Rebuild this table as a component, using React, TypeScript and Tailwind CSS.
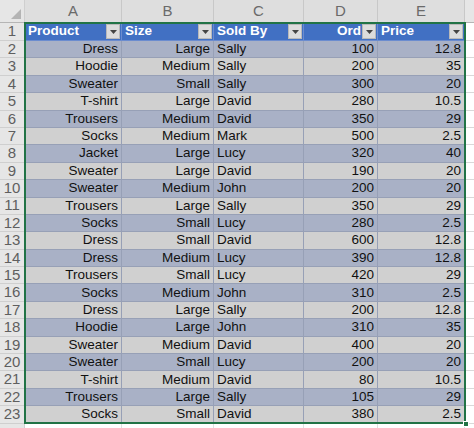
import React from "react";

type Row = [string, string, string, number, number];

const rows: Row[] = [
  ["Dress", "Large", "Sally", 100, 12.8],
  ["Hoodie", "Medium", "Sally", 200, 35],
  ["Sweater", "Small", "Sally", 300, 20],
  ["T-shirt", "Large", "David", 280, 10.5],
  ["Trousers", "Medium", "David", 350, 29],
  ["Socks", "Medium", "Mark", 500, 2.5],
  ["Jacket", "Large", "Lucy", 320, 40],
  ["Sweater", "Large", "David", 190, 20],
  ["Sweater", "Medium", "John", 200, 20],
  ["Trousers", "Large", "Sally", 350, 29],
  ["Socks", "Small", "Lucy", 280, 2.5],
  ["Dress", "Small", "David", 600, 12.8],
  ["Dress", "Medium", "Lucy", 390, 12.8],
  ["Trousers", "Small", "Lucy", 420, 29],
  ["Socks", "Medium", "John", 310, 2.5],
  ["Dress", "Large", "Sally", 200, 12.8],
  ["Hoodie", "Large", "John", 310, 35],
  ["Sweater", "Medium", "David", 400, 20],
  ["Sweater", "Small", "Lucy", 200, 20],
  ["T-shirt", "Medium", "David", 80, 10.5],
  ["Trousers", "Large", "Sally", 105, 29],
  ["Socks", "Small", "David", 380, 2.5],
];

const cols = ["A", "B", "C", "D", "E"];
const widths = ["w-[97px]", "w-[92px]", "w-[90px]", "w-[74px]", "w-[87px]"];

function Dropdown() {
  return (
    <span className="flex h-[15px] w-[14px] shrink-0 items-center justify-center border border-[#b9b9b9] bg-[#dcdcdc]">
      <svg width="7" height="4" viewBox="0 0 7 4">
        <path d="M0 0h7L3.5 4z" fill="#444" />
      </svg>
    </span>
  );
}

function RowNum({ n }: { n: number }) {
  return (
    <div className="flex h-full w-[25px] shrink-0 items-center justify-center border-b border-r border-[#cfcfcf] bg-[#e6e6e6] text-[15px] text-[#5f5f5f]">
      {n}
    </div>
  );
}

export default function App() {
  return (
    <div
      className="relative h-[428px] w-[474px] overflow-hidden bg-white text-[13.5px] text-[#111]"
      style={{ fontFamily: '"Liberation Sans", Arial, sans-serif' }}
    >
      {/* column letters */}
      <div className="flex h-[23px] border-b border-[#b5b5b5] bg-[#e6e6e6]">
        <div className="relative w-[25px] shrink-0 border-r border-[#cfcfcf]">
          <svg className="absolute bottom-[3px] right-[3px]" width="10" height="10" viewBox="0 0 10 10">
            <path d="M10 0v10H0z" fill="#b4b4b4" />
          </svg>
        </div>
        {cols.map((c, i) => (
          <div
            key={c}
            className={`${widths[i]} flex shrink-0 items-center justify-center border-r border-[#c8c8c8] bg-[#dedede] text-[15px] text-[#6a6a6a]`}
          >
            {c}
          </div>
        ))}
        <div className="flex-1" />
      </div>

      <div className="relative">
        {/* header row */}
        <div className="flex h-[18px]">
          <RowNum n={1} />
          {["Product", "Size", "Sold By", "Ord", "Price"].map((h, i) => (
            <div
              key={h}
              className={`${widths[i]} flex shrink-0 items-center gap-[1px] border-r border-b border-[#6b8ccf] bg-[#4170c3] pl-[3px] pr-[1px] font-bold text-white`}
            >
              <span className={`flex-1 truncate ${i === 3 ? "text-right" : ""}`}>{h}</span>
              <Dropdown />
            </div>
          ))}
          <div className="flex-1 border-b border-[#d9d9d9]" />
        </div>

        {rows.map((r, idx) => {
          const bg = idx % 2 === 0 ? "bg-[#a9b1c6]" : "bg-[#d0d0d0]";
          const cell = `flex shrink-0 items-center border-r border-b border-[#97a0b6] px-[3px] ${bg}`;
          return (
            <div key={idx} className="flex h-[17.4px]">
              <RowNum n={idx + 2} />
              <div className={`${widths[0]} ${cell} justify-end`}>{r[0]}</div>
              <div className={`${widths[1]} ${cell} justify-end`}>{r[1]}</div>
              <div className={`${widths[2]} ${cell} justify-start`}>{r[2]}</div>
              <div className={`${widths[3]} ${cell} justify-end`}>{r[3]}</div>
              <div className={`${widths[4]} ${cell} justify-end`}>{r[4]}</div>
              <div className="flex-1 border-b border-[#d9d9d9]" />
            </div>
          );
        })}

        <div className="flex h-[20px]">
          <div className="w-[25px] shrink-0 border-r border-[#cfcfcf] bg-[#e6e6e6]" />
          {widths.map((w) => (
            <div key={w} className={`${w} shrink-0 border-r border-[#e0e0e0]`} />
          ))}
        </div>

        {/* selection outline */}
        <div className="pointer-events-none absolute left-[24px] top-[-1px] h-[402px] w-[442px] border-2 border-[#217346]" />
        <div className="absolute left-[463px] top-[398px] h-[6px] w-[6px] border border-white bg-[#217346]" />
      </div>
    </div>
  );
}
